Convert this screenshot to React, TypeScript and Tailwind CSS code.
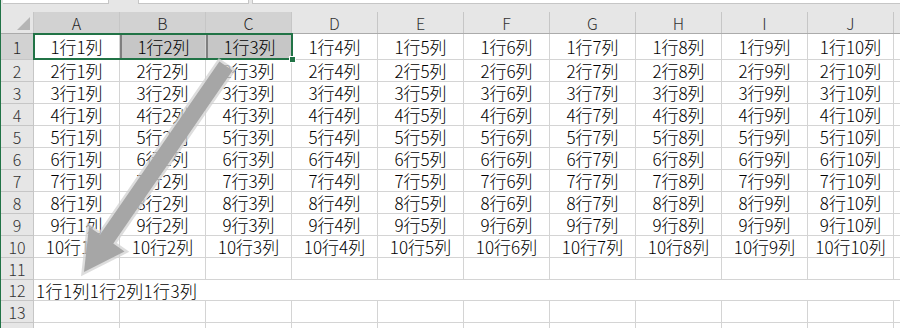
import React from 'react';

const COLS = ['A', 'B', 'C', 'D', 'E', 'F', 'G', 'H', 'I', 'J'];
const ROW_H = [
  'h-[26px]', 'h-[22px]', 'h-[22px]', 'h-[22px]', 'h-[22px]', 'h-[22px]', 'h-[22px]',
  'h-[22px]', 'h-[22px]', 'h-[22px]', 'h-[22px]', 'h-[21px]', 'h-[22px]', 'h-[30px]',
];

const font = { fontFamily: '"Noto Sans CJK JP", "Noto Sans", sans-serif' };

function Arrow() {
  return (
    <svg className="absolute inset-0 pointer-events-none" width="900" height="328" viewBox="0 0 900 328">
      <polygon
        points="232.6,70.5 113.3,243.6 124.5,251.5 84,272 89,226.8 100.1,234.6 219.4,61.5"
        fill="#a6a6a6"
        stroke="rgba(210,210,210,0.75)"
        strokeWidth="5"
        strokeLinejoin="miter"
        style={{ paintOrder: 'stroke' }}
      />
    </svg>
  );
}

export default function App() {
  return (
    <div className="relative w-[900px] h-[328px] overflow-hidden bg-white flex" style={font}>
      <div className="w-px h-full bg-[#217346] shrink-0" />
      <div className="flex flex-col flex-1 min-w-0">
        {/* top strip */}
        <div className="h-[12px] bg-[#e6e6e6] flex items-start shrink-0">
          <div className="ml-[2px] w-[106px] h-[4px] bg-white border-r border-b border-[#c6c6c6]" />
          <div className="ml-[29px] w-[111px] h-[4px] bg-white border-x border-b border-[#c6c6c6]" />
          <div className="ml-[3px] flex-1 h-[4px] bg-white border-l border-b border-[#c6c6c6]" />
        </div>
        {/* column header */}
        <div className="h-[22px] flex shrink-0 bg-[#e6e6e6] border-b border-[#ababab]">
          <div className="w-[33px] shrink-0 border-r border-[#c6c6c6] relative">
            <div className="absolute right-[3px] bottom-[3px] w-0 h-0 border-l-[13px] border-l-transparent border-b-[13px] border-b-[#b5b5b5]" />
          </div>
          {COLS.map((c, i) => (
            <div
              key={c}
              className={
                'w-[86px] shrink-0 flex items-center justify-center text-[16px] leading-none font-light border-r border-[#c6c6c6] ' +
                (i < 3 ? 'bg-[#d2d2d2] text-[#262626]' : 'text-[#333333]')
              }
            >
              <span className="block h-[16px] leading-[16px]">{c}</span>
            </div>
          ))}
          <div className="flex-1" />
        </div>
        {/* rows */}
        {ROW_H.map((h, r) => {
          const row = r + 1;
          return (
            <div key={row} className={'flex shrink-0 ' + h}>
              <div
                className={
                  'w-[33px] shrink-0 flex items-center justify-center text-[16px] leading-none font-light border-r border-b border-[#c6c6c6] ' +
                  (row === 1 ? 'bg-[#d2d2d2] text-[#262626]' : 'bg-[#e6e6e6] text-[#333333]')
                }
              >
                {row <= 13 ? <span className="block h-[16px] leading-[16px]">{row}</span> : null}
              </div>
              {row === 12 ? (
                <div className="flex-1 flex items-center border-b border-[#d4d4d4] pl-[2px] text-[17px] leading-none font-light tracking-[0.4px] whitespace-nowrap text-black">
                  <span className="block h-[17px] leading-[17px]">1行1列1行2列1行3列</span>
                </div>
              ) : (
                <>
                  {COLS.map((c, ci) => {
                    const col = ci + 1;
                    let cls =
                      'w-[86px] shrink-0 flex items-center justify-center text-[17px] leading-none font-light whitespace-nowrap border-r border-b border-[#d4d4d4] text-black ';
                    if (row === 1 && ci > 0 && ci < 3) cls += 'bg-[#c6c6c6] border-l-[2px] border-l-[#7f7f7f] ';
                    return (
                      <div key={c} className={cls}>
                        {row <= 10 ? <span className="block h-[17px] leading-[17px]">{`${row}行${col}列`}</span> : null}
                      </div>
                    );
                  })}
                  <div className="flex-1 border-b border-[#d4d4d4]" />
                </>
              )}
            </div>
          );
        })}
      </div>
      {/* selection */}
      <div className="absolute left-[33px] top-[33px] w-[260px] h-[27px] border-2 border-[#217346] pointer-events-none" />
      <div className="absolute left-[289px] top-[56px] w-[7px] h-[7px] bg-[#217346] border border-white" />
      <Arrow />
    </div>
  );
}
